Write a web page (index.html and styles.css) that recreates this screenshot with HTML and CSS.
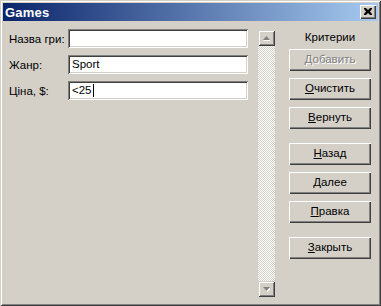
FILE: index.html
```html
<!doctype html>
<html>

<head>
    <meta charset="utf-8">
    <title>Games</title>
    <link rel="stylesheet" href="styles.css">
</head>

<body>
<div class="window">
    <div class="titlebar">
        <span class="title">Games</span>
        <span class="close">
            <svg width="8" height="7" viewBox="0 0 8 7"><path d="M0 0h2l2 2 2-2h2v1L6 3.5 8 6v1H6L4 5 2 7H0V6l2-2.5L0 1z" fill="#000"/></svg>
        </span>
    </div>
    <div class="body">
        <div class="form">
            <div class="row"><label>Назва гри:</label><div class="field"></div></div>
            <div class="row"><label>Жанр:</label><div class="field">Sport</div></div>
            <div class="row"><label>Ціна, $:</label><div class="field">&lt;25<span class="caret"></span></div></div>
        </div>
        <div class="scrollbar">
            <div class="arrow">
                <svg width="7" height="5" viewBox="0 0 7 5"><path d="M4 1l4 4H0z" fill="#fff"/><path d="M3.5 0L7 4H0z" fill="#808080"/></svg>
            </div>
            <div class="track"></div>
            <div class="arrow">
                <svg width="7" height="5" viewBox="0 0 7 5"><path d="M1 1h7L4.5 5z" fill="#fff"/><path d="M0 0h7L3.5 4z" fill="#808080"/></svg>
            </div>
        </div>
        <div class="actions">
            <div class="caption">Критерии</div>
            <div class="btn disabled">Добавить</div>
            <div class="btn"><u>О</u>чистить</div>
            <div class="btn"><u>В</u>ернуть</div>
            <div class="btn space"><u>Н</u>азад</div>
            <div class="btn"><u>Д</u>алее</div>
            <div class="btn"><u>П</u>равка</div>
            <div class="btn space"><u>З</u>акрыть</div>
        </div>
    </div>
</div>
</body>

</html>
```

FILE: styles.css
```css
* {
    padding: 0;
    margin: 0;
    box-sizing: border-box;
}

body {
    font: 11.5px "Liberation Sans", Arial, sans-serif;
    color: #000;
    background: #d4d0c8;
}

.window {
    width: 381px;
    height: 306px;
    padding: 3px;
    background: #d4d0c8;
    box-shadow: inset 1px 1px #d4d0c8, inset -1px -1px #404040, inset 2px 2px #fff, inset -2px -2px #808080;
    display: flex;
    flex-direction: column;
}

.titlebar {
    height: 18px;
    display: flex;
    align-items: center;
    justify-content: space-between;
    background: linear-gradient(to right, #0a246a, #a6caf0);
    padding: 0 2px;
}

.title {
    color: #fff;
    font-weight: bold;
    font-size: 13px;
    letter-spacing: 0.2px;
}

.close {
    width: 16px;
    height: 14px;
    background: #d4d0c8;
    box-shadow: inset 1px 1px #fff, inset -1px -1px #404040, inset -2px -2px #808080;
    display: flex;
    align-items: center;
    justify-content: center;
    padding: 0 1px 1px 0;
}

.close svg {
    display: block;
}

.body {
    flex: 1;
    display: flex;
}

.form {
    width: 255px;
    padding: 8px 0 0 6px;
    display: flex;
    flex-direction: column;
    gap: 7px;
}

.row {
    display: flex;
    align-items: center;
    height: 19px;
}

.row label {
    width: 59px;
}

.field {
    width: 180px;
    height: 19px;
    background: #fff;
    box-shadow: inset 1px 1px #808080, inset -1px -1px #fff, inset 2px 2px #404040, inset -2px -2px #d4d0c8;
    padding: 0 4px;
    line-height: 19px;
    display: flex;
    align-items: center;
}

.caret {
    width: 1px;
    height: 13px;
    background: #000;
    margin-left: 1px;
}

.scrollbar {
    width: 17px;
    height: 267px;
    margin-top: 9px;
    display: flex;
    flex-direction: column;
}

.arrow {
    height: 16px;
    background: #d4d0c8;
    box-shadow: inset 1px 1px #d4d0c8, inset -1px -1px #404040, inset 2px 2px #fff, inset -2px -2px #808080;
    display: flex;
    align-items: center;
    justify-content: center;
}

.arrow svg {
    display: block;
}

.track {
    flex: 1;
    background: repeating-conic-gradient(#fff 0 25%, #d4d0c8 0 50%) 0 0 / 2px 2px;
}

.actions {
    flex: 1;
    padding: 8px 0 0 14px;
    display: flex;
    flex-direction: column;
    gap: 7px;
}

.caption {
    width: 82px;
    text-align: center;
    line-height: 16px;
    margin-bottom: -3px;
}

.btn {
    width: 82px;
    height: 22px;
    line-height: 20px;
    text-align: center;
    box-shadow: inset 1px 1px #fff, inset -1px -1px #404040, inset -2px -2px #808080;
}

.btn.space {
    margin-top: 7px;
}

.btn.disabled {
    color: #808080;
    text-shadow: 1px 1px #fff;
}
```
